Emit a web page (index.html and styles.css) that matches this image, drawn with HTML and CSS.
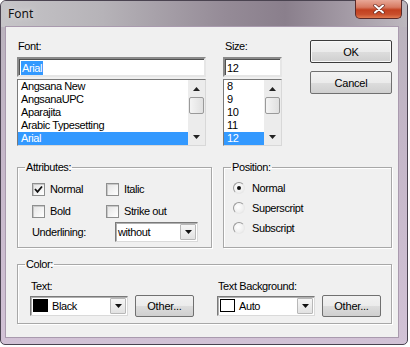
FILE: index.html
```html
<!DOCTYPE html>
<html lang="en">
<head>
  <meta charset="UTF-8"/>
  <title>Font</title>
  <link rel="stylesheet" href="styles.css">
</head>
<body>
  <div class="window">
    <div class="titlebar">
      <span class="title">Font</span>
      <button class="close-btn" aria-label="Close">
        <svg width="12" height="10" viewBox="0 0 12 10">
          <path d="M2 1.5 L10 8.5 M10 1.5 L2 8.5" stroke="#6b2a22" stroke-width="3.4" stroke-linecap="round"/>
          <path d="M2 1.5 L10 8.5 M10 1.5 L2 8.5" stroke="#fff" stroke-width="2" stroke-linecap="round"/>
        </svg>
      </button>
    </div>

    <div class="client">
      <div class="top-row">
        <div class="font-col">
          <label class="field-label">Font:</label>
          <div class="textbox"><span class="selected-text">Arial</span></div>
          <div class="listbox font-list">
            <ul>
              <li>Angsana New</li>
              <li>AngsanaUPC</li>
              <li>Aparajita</li>
              <li>Arabic Typesetting</li>
              <li class="active">Arial</li>
            </ul>
            <div class="scrollbar">
              <span class="arrow up"><svg width="7" height="4" viewBox="0 0 7 4"><polygon points="0,4 3.5,0 7,4" fill="#222"/></svg></span>
              <span class="thumb"></span>
              <span class="track"></span>
              <span class="arrow"><svg width="7" height="4" viewBox="0 0 7 4"><polygon points="0,0 7,0 3.5,4" fill="#222"/></svg></span>
            </div>
          </div>
        </div>

        <div class="size-col">
          <label class="field-label">Size:</label>
          <div class="textbox">12</div>
          <div class="listbox size-list">
            <ul>
              <li>8</li>
              <li>9</li>
              <li>10</li>
              <li>11</li>
              <li class="active">12</li>
            </ul>
            <div class="scrollbar">
              <span class="arrow up"><svg width="7" height="4" viewBox="0 0 7 4"><polygon points="0,4 3.5,0 7,4" fill="#222"/></svg></span>
              <span class="thumb"></span>
              <span class="track"></span>
              <span class="arrow"><svg width="7" height="4" viewBox="0 0 7 4"><polygon points="0,0 7,0 3.5,4" fill="#222"/></svg></span>
            </div>
          </div>
        </div>

        <div class="button-col">
          <button class="btn default">OK</button>
          <button class="btn">Cancel</button>
        </div>
      </div>

      <div class="group-row">
        <fieldset class="group attributes">
          <legend>Attributes:</legend>
          <div class="group-body">
            <div class="check-grid">
              <div class="check-item"><span class="checkbox checked"><svg width="9" height="9" viewBox="0 0 9 9"><polyline points="1,4 3.5,6.8 8,1.5" fill="none" stroke="#111" stroke-width="1.8"/></svg></span>Normal</div>
              <div class="check-item"><span class="checkbox"></span>Italic</div>
              <div class="check-item"><span class="checkbox"></span>Bold</div>
              <div class="check-item"><span class="checkbox"></span>Strike out</div>
            </div>
            <div class="underline-row">
              <span class="underline-label">Underlining:</span>
              <div class="combo underline-combo">
                <span class="combo-text">without</span>
                <span class="drop-btn"><svg width="7" height="4" viewBox="0 0 7 4"><polygon points="0,0 7,0 3.5,4" fill="#111"/></svg></span>
              </div>
            </div>
          </div>
        </fieldset>

        <fieldset class="group position">
          <legend>Position:</legend>
          <div class="group-body">
            <div class="radio-item"><span class="radio checked"></span>Normal</div>
            <div class="radio-item"><span class="radio"></span>Superscript</div>
            <div class="radio-item"><span class="radio"></span>Subscript</div>
          </div>
        </fieldset>
      </div>

      <fieldset class="group color">
        <legend>Color:</legend>
        <div class="group-body color-cols">
          <div class="color-col text-col">
            <span class="color-label">Text:</span>
            <div class="color-row">
              <div class="combo color-combo">
                <span class="swatch black"></span>
                <span class="combo-text">Black</span>
                <span class="drop-btn"><svg width="7" height="4" viewBox="0 0 7 4"><polygon points="0,0 7,0 3.5,4" fill="#111"/></svg></span>
              </div>
              <button class="btn other-btn">Other...</button>
            </div>
          </div>
          <div class="color-col bg-col">
            <span class="color-label">Text Background:</span>
            <div class="color-row">
              <div class="combo color-combo">
                <span class="swatch white"></span>
                <span class="combo-text">Auto</span>
                <span class="drop-btn"><svg width="7" height="4" viewBox="0 0 7 4"><polygon points="0,0 7,0 3.5,4" fill="#111"/></svg></span>
              </div>
              <button class="btn other-btn">Other...</button>
            </div>
          </div>
        </div>
      </fieldset>
    </div>
  </div>
</body>
</html>
```

FILE: styles.css
```css
/* Global styles */
* {
  margin: 0;
  padding: 0;
  box-sizing: border-box;
}

body {
  background: #fff;
  font-family: "Liberation Sans", Arial, sans-serif;
  font-size: 11px;
  letter-spacing: -0.4px;
  color: #000;
}

/* Window frame */
.window {
  width: 408px;
  height: 345px;
  border: 1px solid #4a4350;
  border-radius: 6px 6px 5px 5px;
  padding: 0 9px 7px 5px;
  background: linear-gradient(180deg, #b8b2bb 0%, #c4b6c8 40%, #d2c2d6 100%);
}

.titlebar {
  height: 26px;
  margin: 0 -9px 0 -5px;
  padding-left: 7px;
  display: flex;
  align-items: flex-start;
  border-radius: 5px 5px 0 0;
  background: linear-gradient(90deg, #c6c5c8 0%, #b6b3b8 25%, #958b97 55%, #8a7f8c 70%, #a39aa5 85%, #bdb8bf 100%);
}

.title {
  font-family: "Noto Sans", "Open Sans", sans-serif;
  font-size: 12px;
  letter-spacing: 0;
  line-height: 26px;
  color: #111;
  text-shadow: 0 0 6px rgba(255, 255, 255, 0.7);
}

.close-btn {
  margin-left: auto;
  margin-right: 5px;
  margin-top: -1px;
  width: 47px;
  height: 19px;
  border: 1px solid #5a2a28;
  border-top: none;
  border-radius: 0 0 5px 5px;
  background: linear-gradient(180deg, #e8a897 0%, #d77a62 40%, #c2401f 55%, #c84e2c 80%, #e07a50 100%);
  display: flex;
  align-items: center;
  justify-content: center;
}

.client {
  width: 392px;
  height: 310px;
  background: #f0f0f0;
  box-shadow: 0 0 0 1px #a99aae;
  padding: 13px 6px 0 11px;
}

/* Top section */
.top-row {
  display: flex;
  height: 106px;
}

.font-col {
  width: 189px;
}

.size-col {
  width: 59px;
  margin-left: 17px;
}

.button-col {
  width: 82px;
  margin-left: 28px;
  display: flex;
  flex-direction: column;
  gap: 8px;
}

.field-label {
  display: block;
  height: 13px;
  line-height: 13px;
  padding-left: 1px;
  margin-bottom: 4px;
}

.size-col .field-label {
  padding-left: 2px;
}

.textbox {
  height: 20px;
  line-height: 16px;
  background: #fff;
  border: 2px solid;
  border-color: #8a8a8a #e6e6e6 #e6e6e6 #8a8a8a;
  box-shadow: inset 1px 1px 0 #505050;
  padding: 1px 2px;
}

.selected-text {
  display: inline-block;
  line-height: 14px;
  background: #3399ff;
  color: #fff;
  padding: 0 1px;
}

.listbox {
  margin-top: 2px;
  height: 67px;
  display: flex;
  background: #fff;
  border: 1px solid #7a7a7a;
  border-right-color: #d8d8d8;
  border-bottom-color: #d8d8d8;
}

.listbox ul {
  flex: 1;
  list-style: none;
}

.listbox li {
  height: 13px;
  line-height: 13px;
  padding-left: 3px;
  white-space: nowrap;
}

.listbox li.active {
  background: #3399ff;
  color: #fff;
}

.scrollbar {
  width: 17px;
  display: flex;
  flex-direction: column;
  background: #ececec;
}

.scrollbar .arrow {
  height: 17px;
  display: flex;
  align-items: center;
  justify-content: center;
}

.scrollbar .thumb {
  height: 17px;
  margin: 0 1px;
  border: 1px solid #9a9a9a;
  border-radius: 2px;
  background: linear-gradient(90deg, #f4f4f4, #e0e0e0);
}

.scrollbar .track {
  flex: 1;
}

/* Buttons */
.btn {
  font-family: "Liberation Sans", Arial, sans-serif;
  font-size: 11px;
  letter-spacing: -0.2px;
  height: 23px;
  color: #000;
  border: 1px solid #707070;
  border-radius: 2px;
  background: linear-gradient(180deg, #f2f2f2 0%, #ebebeb 50%, #dddddd 51%, #cfcfcf 100%);
}

.btn.default {
  border-color: #3c3c3c;
  box-shadow: inset 0 0 0 1px #f8f8f8;
}

/* Group boxes */
.group {
  border: 1px solid #a8a8a8;
  box-shadow: inset 1px 1px 0 #fff, 1px 1px 0 #fff;
  min-width: 0;
  padding: 0;
}

.group legend {
  margin-left: 7px;
  padding: 0 1px;
  line-height: 13px;
}

.group-row {
  display: flex;
  gap: 11px;
  margin-top: 15px;
}

.attributes {
  width: 195px;
}

.attributes .group-body {
  padding: 4px 12px 5px 14px;
}

.check-grid {
  display: grid;
  grid-template-columns: 74px 1fr;
  grid-auto-rows: 22px;
}

.check-item {
  display: flex;
  align-items: center;
}

.checkbox {
  width: 13px;
  height: 13px;
  margin-right: 5px;
  border: 1px solid #8e8f8f;
  background: linear-gradient(135deg, #e4e4e4, #ffffff);
  box-shadow: inset 1px 1px 0 #c8c8c8;
  display: flex;
  align-items: center;
  justify-content: center;
}

.underline-row {
  display: flex;
  align-items: center;
  height: 20px;
}

.underline-label {
  width: 83px;
}

.combo {
  display: flex;
  align-items: center;
  height: 20px;
  background: #fff;
  border: 1px solid #7a7a7a;
  border-right-color: #dadada;
  border-bottom-color: #dadada;
  box-shadow: inset 1px 1px 0 #b0b0b0;
}

.underline-combo {
  width: 83px;
}

.combo-text {
  flex: 1;
  padding-left: 2px;
}

.drop-btn {
  width: 16px;
  height: 16px;
  margin-right: 1px;
  border: 1px solid #b8b8b8;
  border-radius: 1px;
  background: linear-gradient(180deg, #f6f6f6, #e2e2e2);
  display: flex;
  align-items: center;
  justify-content: center;
}

.position {
  width: 169px;
}

.position .group-body {
  padding: 4px 10px 5px 9px;
}

.radio-item {
  display: flex;
  align-items: center;
  height: 20px;
}

.radio {
  width: 12px;
  height: 12px;
  margin-right: 7px;
  border-radius: 50%;
  border: 1px solid #9a9a9a;
  border-right-color: #e8e8e8;
  border-bottom-color: #e8e8e8;
  background: radial-gradient(circle at 40% 40%, #ffffff, #e6e6e6);
  display: flex;
  align-items: center;
  justify-content: center;
}

.radio.checked::after {
  content: "";
  width: 4px;
  height: 4px;
  border-radius: 50%;
  background: #111;
}

/* Color group */
.color {
  width: 375px;
  margin-top: 10px;
}

.color-cols {
  display: flex;
  padding: 9px 10px 6px 12px;
}

.color-col {
  display: flex;
  flex-direction: column;
}

.text-col {
  width: 187px;
}

.color-label {
  height: 13px;
  line-height: 13px;
  padding-left: 1px;
}

.color-row {
  display: flex;
  align-items: center;
  gap: 7px;
  margin-top: 1px;
  height: 23px;
}

.color-combo {
  width: 98px;
}

.swatch {
  width: 15px;
  height: 13px;
  margin-left: 2px;
  border: 1px solid #000;
}

.swatch.black {
  background: #000;
}

.swatch.white {
  background: #fff;
}

.color-combo .combo-text {
  padding-left: 4px;
}

.other-btn {
  width: 59px;
  height: 22px;
}
```
